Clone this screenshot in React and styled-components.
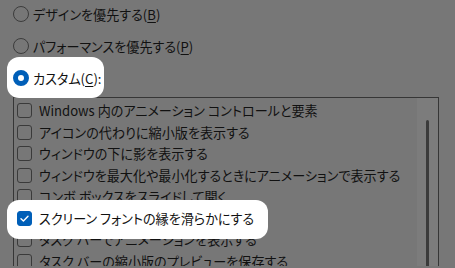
import React from 'react'
import styled, { createGlobalStyle, css } from 'styled-components'

const GlobalStyle = createGlobalStyle`
  html, body {
    margin: 0;
    padding: 0;
    background: #777777;
    overflow: hidden;
  }
  body {
    font-family: "Noto Sans CJK JP", "Noto Sans", sans-serif;
    font-size: 13.1px;
    color: #111111;
    font-feature-settings: "palt";
  }
`

// white rounded patch that lifts a row out of the dimmed dialog
const spot = css`
  position: relative;
  z-index: 1;
  &::before {
    content: '';
    position: absolute;
    top: ${p => p.$spot.top}px;
    right: ${p => p.$spot.right}px;
    bottom: ${p => p.$spot.bottom}px;
    left: ${p => p.$spot.left}px;
    background: #ffffff;
    border-radius: 12px;
    z-index: -1;
  }
`

const Page = styled.div`
  box-sizing: border-box;
  width: 455px;
  height: 268px;
  padding: 0 16px 0 13px;
`

const RadioGroup = styled.div`
  display: flex;
  flex-direction: column;
  margin-top: -2px;
`

const RadioRow = styled.div`
  display: flex;
  align-items: center;
  gap: 4px;
  height: 32px;
  width: fit-content;
  white-space: nowrap;
  ${p => p.$spot && spot}
`

const Radio = styled.span`
  box-sizing: border-box;
  width: 16px;
  height: 16px;
  border-radius: 50%;
  border: ${p => (p.$on ? '5px solid #005fb8' : '1.5px solid #3c3c3c')};
  background: ${p => (p.$on ? '#ffffff' : 'transparent')};
  flex-shrink: 0;
`

const Key = styled.u`
  text-decoration-thickness: 1px;
  text-underline-offset: 2px;
`

const ListBox = styled.div`
  display: flex;
  margin-top: 3px;
  height: 220px;
  border: 1px solid #363636;
`

const Items = styled.div`
  flex: 1;
  display: flex;
  flex-direction: column;
  padding: 2px 0 0 3px;
`

const CheckRow = styled.div`
  display: flex;
  align-items: center;
  gap: 7px;
  height: 21.5px;
  white-space: nowrap;
  ${p => p.$spot && css`
    width: fit-content;
    ${spot}
  `}
`

const Box = styled.span`
  box-sizing: border-box;
  display: flex;
  align-items: center;
  justify-content: center;
  width: 15px;
  height: 15px;
  border-radius: 3px;
  border: 1px solid ${p => (p.$on ? '#005fb8' : '#3a3a3a')};
  background: ${p => (p.$on ? '#005fb8' : 'transparent')};
  flex-shrink: 0;
`

const ScrollTrack = styled.div`
  width: 21px;
  background: #7c7c7c;
  display: flex;
  justify-content: center;
  padding-top: 22px;
`

const Thumb = styled.div`
  width: 3px;
  height: 100%;
  border-radius: 2px;
  background: #3b3b3b;
`

const effects = [
  'Windows 内のアニメーション コントロールと要素',
  'アイコンの代わりに縮小版を表示する',
  'ウィンドウの下に影を表示する',
  'ウィンドウを最大化や最小化するときにアニメーションで表示する',
  'コンボ ボックスをスライドして開く',
  'スクリーン フォントの縁を滑らかにする',
  'タスク バーでアニメーションを表示する',
  'タスク バーの縮小版のプレビューを保存する',
]

const Check = () => (
  <svg width="11" height="11" viewBox="0 0 11 11">
    <polyline points="2,5.8 4.4,8 9,3.2" fill="none" stroke="#ffffff" strokeWidth="1.4" strokeLinecap="round" strokeLinejoin="round" />
  </svg>
)

export default function App() {
  return (
    <>
      <GlobalStyle />
      <Page>
        <RadioGroup>
          <RadioRow>
            <Radio />
            <span>デザインを優先する(<Key>B</Key>)</span>
          </RadioRow>
          <RadioRow>
            <Radio />
            <span>パフォーマンスを優先する(<Key>P</Key>)</span>
          </RadioRow>
          <RadioRow $spot={{ top: -5, right: -3, bottom: -4, left: -6 }}>
            <Radio $on />
            <span>カスタム(<Key>C</Key>):</span>
          </RadioRow>
        </RadioGroup>
        <ListBox>
          <Items>
            {effects.map((label, i) => {
              const on = i === 5
              return (
                <CheckRow key={label} $spot={on ? { top: -8, right: -14, bottom: -10, left: -10 } : null}>
                  <Box $on={on}>{on && <Check />}</Box>
                  <span>{label}</span>
                </CheckRow>
              )
            })}
          </Items>
          <ScrollTrack>
            <Thumb />
          </ScrollTrack>
        </ListBox>
      </Page>
    </>
  )
}
